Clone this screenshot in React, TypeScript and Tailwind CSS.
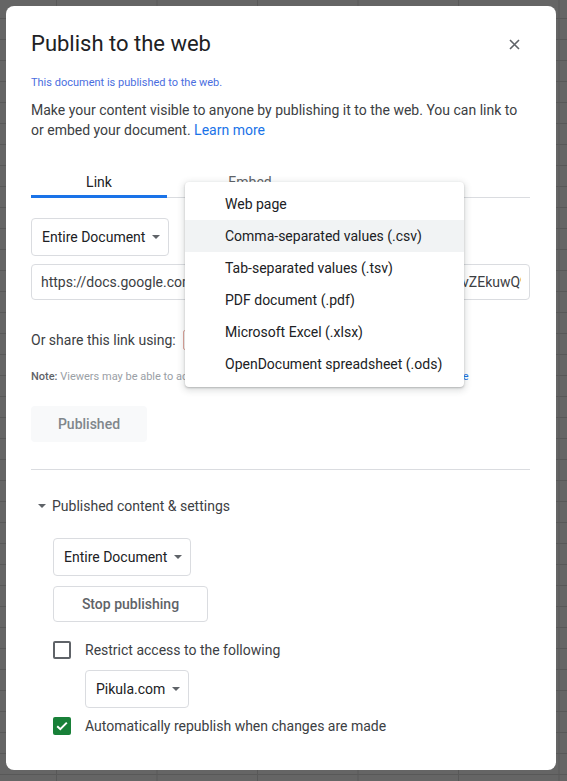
const formats = [
  "Web page",
  "Comma-separated values (.csv)",
  "Tab-separated values (.tsv)",
  "PDF document (.pdf)",
  "Microsoft Excel (.xlsx)",
  "OpenDocument spreadsheet (.ods)",
]

function Caret() {
  return <span className="block h-0 w-0 border-x-[4px] border-t-[4px] border-x-transparent border-t-[#5f6368]" />
}

function Select({ label }: { label: string }) {
  return (
    <div className="flex h-[38px] w-fit items-center gap-[7px] rounded-[4px] border border-[#dadce0] pl-[10px] pr-[8px] text-[14px] text-[#202124]">
      <span>{label}</span>
      <Caret />
    </div>
  )
}

export default function App() {
  return (
    <div className="min-h-screen w-full bg-[#656565] bg-[linear-gradient(to_right,#585858_1px,transparent_1px),linear-gradient(to_bottom,#585858_1px,transparent_1px)] bg-size-[100.5px_21px] bg-position-[56px_18px] p-[6px] font-[Roboto,sans-serif]">
      <div className="relative h-[764px] w-[550px] rounded-[8px] bg-white pl-[25px] pr-[26px] pt-[24px]">
        {/* header */}
        <div className="flex h-[28px] items-center justify-between">
          <h1 className="text-[22px] leading-[28px] text-[#202124]">Publish to the web</h1>
          <svg width="11" height="11" viewBox="0 0 11 11" className="mr-[10px]">
            <path d="M1 1L10 10M10 1L1 10" stroke="#5f6368" strokeWidth="1.6" />
          </svg>
        </div>

        <p className="mt-[17px] text-[11px] leading-[16px] text-[#4a6ee0]">This document is published to the web.</p>
        <p className="mt-[9px] text-[14px] leading-[20px] text-[#3c4043]">
          Make your content visible to anyone by publishing it to the web. You can link to
          <br />
          or embed your document. <span className="text-[#1a73e8]">Learn more</span>
        </p>

        {/* tabs */}
        <div className="mt-[10px] flex border-b border-[#dadce0]">
          <div className="-mb-px flex h-[48px] w-[136px] items-end justify-center border-b-[3px] border-[#1a73e8] pb-[3px] text-[14px] leading-[20px] text-[#202124]">
            Link
          </div>
          <div className="flex h-[47px] w-[166px] items-end justify-center pb-[5px] text-[14px] leading-[20px] text-[#5f6368]">
            Embed
          </div>
        </div>

        <div className="mt-[20px]">
          <Select label="Entire Document" />
        </div>

        <div className="mt-[8px] flex h-[36px] items-center rounded-[4px] border border-[#dadce0] pl-[9px] pr-[8px] text-[14px] text-[#3c4043]">
          <div className="flex flex-1 overflow-hidden whitespace-nowrap">
            <span className="w-[421px] shrink-0 overflow-hidden">https://docs.google.com/spreadsheets/d/e/2PACX-1vRk3pubhtml</span>
            <span className="shrink-0">vZEkuwQ9aXb/pubhtml</span>
          </div>
        </div>

        <div className="mt-[30px] flex h-[20px] items-center text-[14px] text-[#3c4043]">
          <span>Or share this link using:</span>
          <span className="ml-[7px] h-[20px] w-[24px] rounded-[2px] border border-[#e0a49b]" />
        </div>

        <div className="mt-[19px] flex whitespace-nowrap text-[11px] leading-[16px]">
          <span className="w-[382px] shrink-0 overflow-hidden text-[#9aa0a6]">
            <span className="font-medium text-[#5f6368]">Note:</span> Viewers may be able to access the underlying data for published charts.
          </span>
          <span className="text-[#1a73e8]">Learn more</span>
        </div>

        <div className="mt-[21px] flex h-[36px] w-[116px] items-center justify-center rounded-[4px] bg-[#f8f9fa] text-[14px] font-medium text-[#80868b]">
          Published
        </div>

        <div className="mt-[27px] h-px bg-[#dadce0]" />

        <div className="mt-[26px] flex h-[20px] items-center text-[14px] text-[#3c4043]">
          <span className="ml-[7px]">
            <Caret />
          </span>
          <span className="ml-[6px]">Published content &amp; settings</span>
        </div>

        <div className="pl-[22px]">
          <div className="mt-[22px]">
            <Select label="Entire Document" />
          </div>
          <div className="mt-[10px] flex h-[36px] w-[155px] items-center justify-center rounded-[4px] border border-[#dadce0] text-[14px] font-medium text-[#5f6368]">
            Stop publishing
          </div>

          <div className="mt-[18px] flex h-[20px] items-center text-[14px] text-[#3c4043]">
            <span className="h-[18px] w-[18px] rounded-[2px] border-2 border-[#5f6368]" />
            <span className="ml-[14px]">Restrict access to the following</span>
          </div>

          <div className="ml-[32px] mt-[10px]">
            <Select label="Pikula.com" />
          </div>

          <div className="mt-[8px] flex h-[20px] items-center text-[14px] text-[#3c4043]">
            <span className="flex h-[18px] w-[18px] items-center justify-center rounded-[2px] bg-[#188038]">
              <svg width="12" height="10" viewBox="0 0 12 10">
                <path d="M1.2 5.2L4.3 8.2L10.8 1.6" fill="none" stroke="white" strokeWidth="2" />
              </svg>
            </span>
            <span className="ml-[14px]">Automatically republish when changes are made</span>
          </div>
        </div>

        {/* open format menu */}
        <div className="absolute left-[179px] top-[176px] w-[279px] rounded-[4px] bg-white pb-[7px] pt-[6px] shadow-[0_2px_6px_2px_rgba(60,64,67,0.15),0_1px_2px_rgba(60,64,67,0.3)]">
          {formats.map((f, i) => (
            <div
              key={f}
              className={`flex h-[32px] items-center pl-[40px] text-[14px] text-[#202124] ${i === 1 ? "bg-[#f1f3f4]" : ""}`}
            >
              {f}
            </div>
          ))}
        </div>
      </div>
    </div>
  )
}
